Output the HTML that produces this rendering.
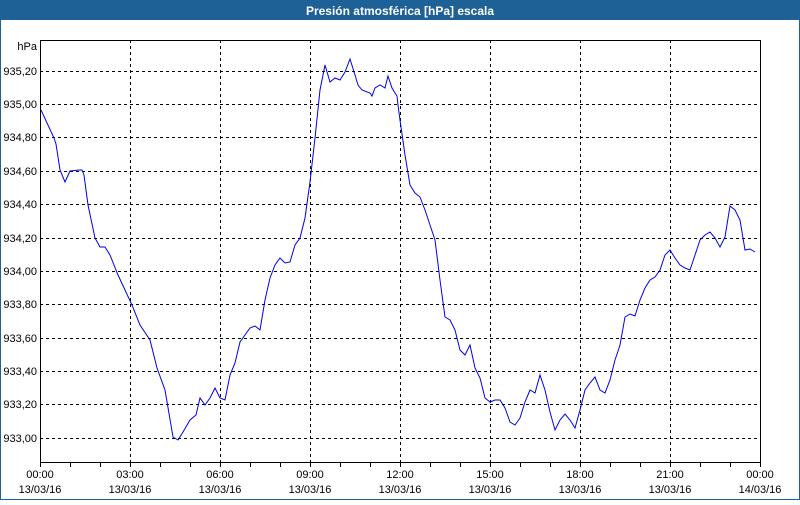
<!DOCTYPE html>
<html><head><meta charset="utf-8"><style>
body{margin:0;width:800px;height:500px;overflow:hidden;background:#fff;font-family:"Liberation Sans",sans-serif}
</style></head><body>
<svg width="800" height="500" xmlns="http://www.w3.org/2000/svg" font-family="Liberation Sans, sans-serif" font-size="11">
<rect x="0" y="0" width="800" height="500" fill="#fff"/>
<rect x="0" y="0" width="800" height="20" fill="#1e6196"/>
<rect x="0.5" y="0.5" width="799" height="499" fill="none" stroke="#1e6196"/>
<text x="400" y="15" text-anchor="middle" fill="#fff" font-weight="bold" font-size="12">Presión atmosférica [hPa] escala</text>
<g stroke="#000" stroke-dasharray="3,3" stroke-width="1">
<line x1="40" x2="760" y1="71.5" y2="71.5"/><line x1="40" x2="760" y1="104.5" y2="104.5"/>
<line x1="40" x2="760" y1="137.5" y2="137.5"/><line x1="40" x2="760" y1="171.5" y2="171.5"/>
<line x1="40" x2="760" y1="204.5" y2="204.5"/><line x1="40" x2="760" y1="238.5" y2="238.5"/>
<line x1="40" x2="760" y1="271.5" y2="271.5"/><line x1="40" x2="760" y1="304.5" y2="304.5"/>
<line x1="40" x2="760" y1="338.5" y2="338.5"/><line x1="40" x2="760" y1="371.5" y2="371.5"/>
<line x1="40" x2="760" y1="404.5" y2="404.5"/><line x1="40" x2="760" y1="438.5" y2="438.5"/>
<line y1="40" y2="462" x1="130.5" x2="130.5"/><line y1="40" y2="462" x1="220.5" x2="220.5"/>
<line y1="40" y2="462" x1="310.5" x2="310.5"/><line y1="40" y2="462" x1="400.5" x2="400.5"/>
<line y1="40" y2="462" x1="490.5" x2="490.5"/><line y1="40" y2="462" x1="580.5" x2="580.5"/>
<line y1="40" y2="462" x1="670.5" x2="670.5"/>
</g>
<rect x="40.5" y="40.5" width="720" height="422" fill="none" stroke="#000"/>
<g stroke="#000">
<path d="M70.5 462v5M100.5 462v5M130.5 462v5M160.5 462v5M190.5 462v5M220.5 462v5M250.5 462v5M280.5 462v5M310.5 462v5M340.5 462v5M370.5 462v5M400.5 462v5M430.5 462v5M460.5 462v5M490.5 462v5M520.5 462v5M550.5 462v5M580.5 462v5M610.5 462v5M640.5 462v5M670.5 462v5M700.5 462v5M730.5 462v5M760.5 462v5M40.5 462v5"/>
</g>
<g text-anchor="end" fill="#000">
<text x="37" y="50">hPa</text>
<text x="37" y="75">935,20</text><text x="37" y="108">935,00</text><text x="37" y="141">934,80</text>
<text x="37" y="175">934,60</text><text x="37" y="208">934,40</text><text x="37" y="242">934,20</text>
<text x="37" y="275">934,00</text><text x="37" y="308">933,80</text><text x="37" y="342">933,60</text>
<text x="37" y="375">933,40</text><text x="37" y="408">933,20</text><text x="37" y="442">933,00</text>
</g>
<g text-anchor="middle" fill="#000">
<text x="40" y="478">00:00</text><text x="40" y="493">13/03/16</text>
<text x="130" y="478">03:00</text><text x="130" y="493">13/03/16</text>
<text x="220" y="478">06:00</text><text x="220" y="493">13/03/16</text>
<text x="310" y="478">09:00</text><text x="310" y="493">13/03/16</text>
<text x="400" y="478">12:00</text><text x="400" y="493">13/03/16</text>
<text x="490" y="478">15:00</text><text x="490" y="493">13/03/16</text>
<text x="580" y="478">18:00</text><text x="580" y="493">13/03/16</text>
<text x="670" y="478">21:00</text><text x="670" y="493">13/03/16</text>
<text x="760" y="478">00:00</text><text x="760" y="493">14/03/16</text>
</g>
<polyline fill="none" stroke="#0000ee" stroke-width="1" points="41,110 54,138 56,144 60,170 65,182 70,171 79,170 82,170 84,175 88,205 95,238 100,247 105,247 110,255 118,275 125,290 132,305 140,325 150,340 157,368 165,390 173,437 178,440 183,432 190,420 196,415 200,398 205,405 210,398 215,388 220,398 225,400 230,375 235,363 240,342 245,335 250,328 255,326 260,330 265,300 270,278 275,265 280,258 285,263 290,262 295,245 300,238 305,218 310,182 315,138 320,90 325,65 330,82 335,78 340,80 345,72 350,59 355,75 358,85 362,90 370,93 372,96 375,88 380,85 385,88 388,76 392,88 395,93 397,96 398,105 400,120 405,155 410,185 415,193 420,197 425,210 430,225 435,240 440,280 445,317 450,320 455,330 460,350 465,355 470,345 475,368 480,378 485,398 490,402 495,400 500,400 505,408 510,422 515,425 520,418 525,402 530,390 535,393 540,375 545,390 550,412 555,430 560,420 565,414 570,420 575,428 580,410 585,390 590,383 595,377 600,390 605,393 610,380 615,360 620,345 625,317 630,314 635,316 640,300 645,288 650,280 655,277 660,270 665,255 670,250 675,258 680,265 685,268 690,270 695,255 700,240 705,235 710,232 715,238 720,247 725,237 730,206 735,210 740,220 745,250 750,249 755,252"/>
</svg>
</body></html>
